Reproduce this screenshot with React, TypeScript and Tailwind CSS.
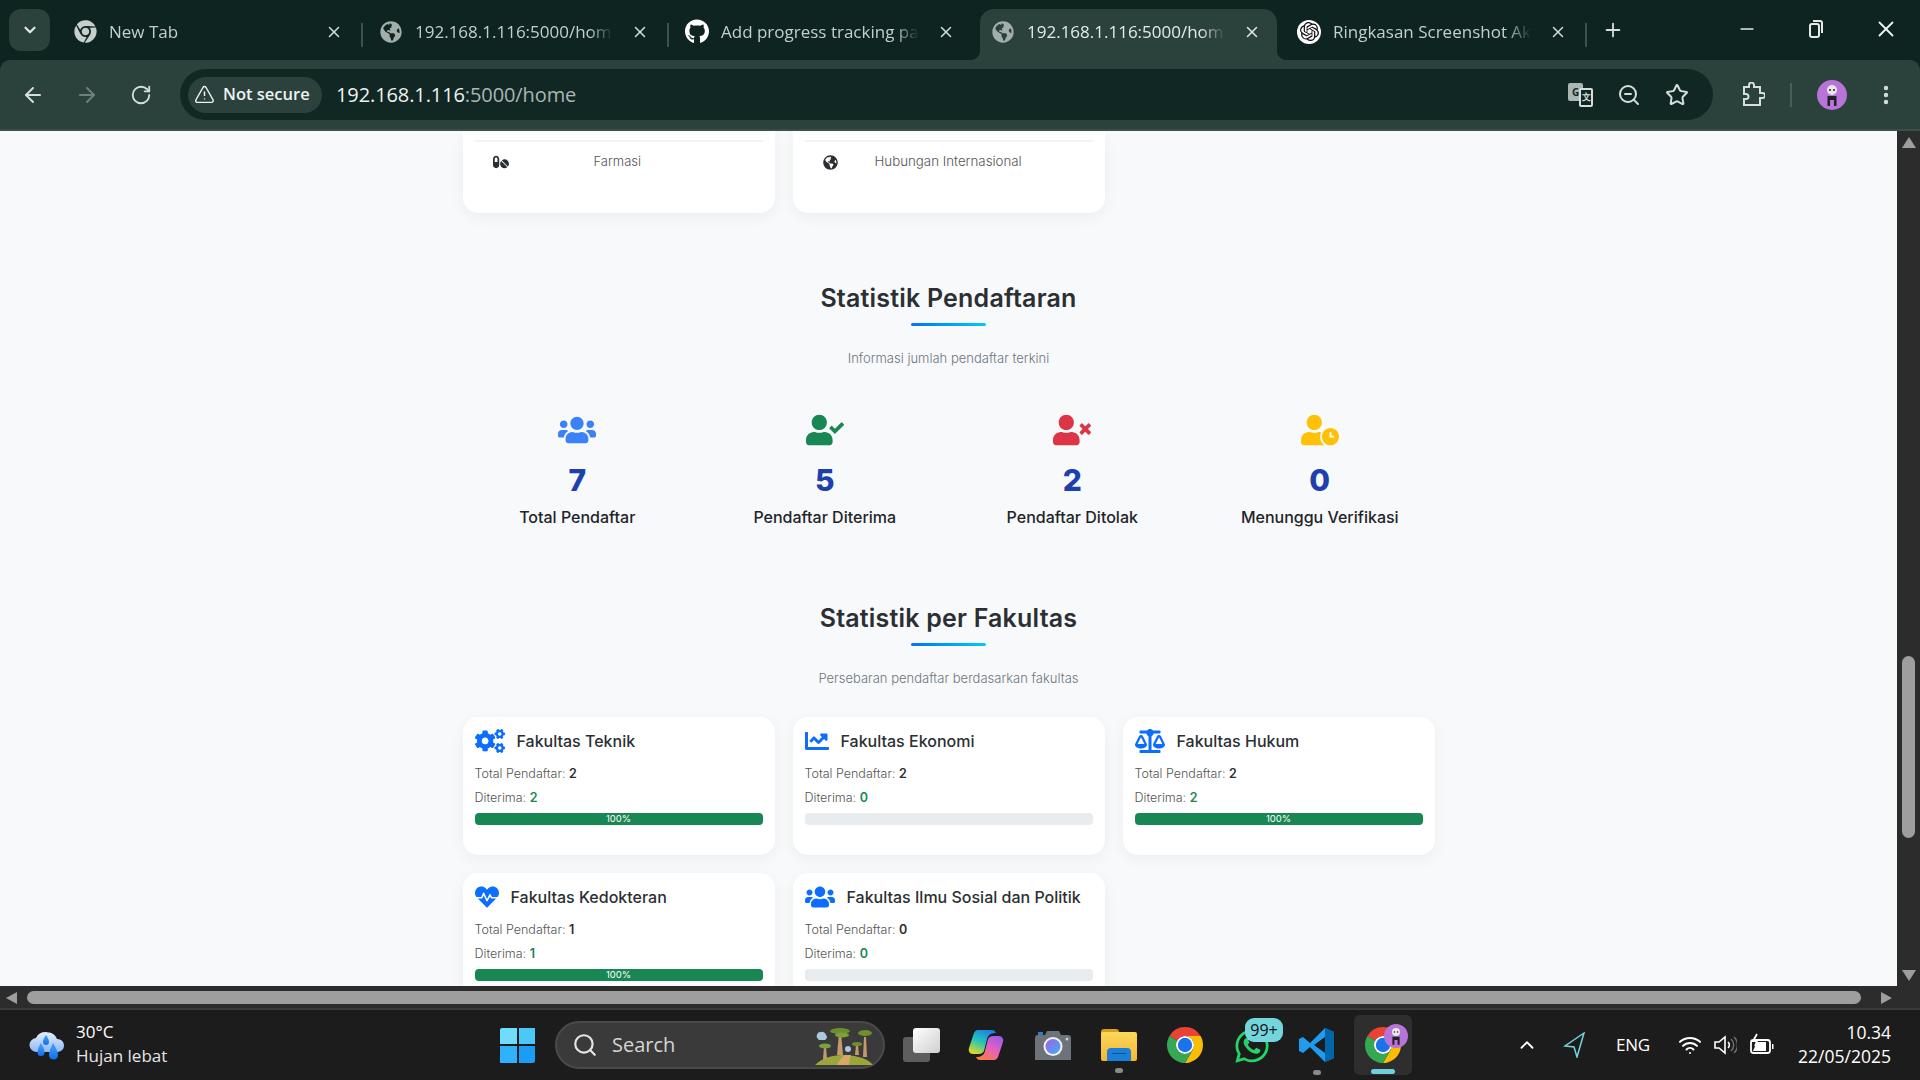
import { ArrowLeft, ArrowRight, ChevronDown, ChevronUp, Minus, MoreVertical, Plus, RotateCw, Search, Star, TriangleAlert, Wifi, X, ZoomOut } from 'lucide-react';
import { FaBalanceScale, FaChartLine, FaChrome, FaCogs, FaGithub, FaGlobeAmericas, FaHeartbeat, FaPills, FaUserCheck, FaUserClock, FaUsers, FaUserTimes, FaWhatsapp } from 'react-icons/fa';
import { SiOpenai } from 'react-icons/si';

const uiFont = "font-['Open_Sans','Noto_Sans',sans-serif]";

const ChromeLogo = ({ size = 36 }: { size?: number }) => (
    <svg width={size} height={size} viewBox="4 4 40 40">
        <path d="M24 4A20 20 0 0 1 41.32 14L24 14A10 10 0 0 0 15.34 19L6.68 14A20 20 0 0 1 24 4Z" fill="#ea4335" />
        <path d="M41.32 14A20 20 0 0 1 24 44L32.66 29A10 10 0 0 0 24 14Z" fill="#fbbc04" />
        <path d="M24 44A20 20 0 0 1 6.68 14L15.34 19A10 10 0 0 0 32.66 29Z" fill="#34a853" />
        <circle cx="24" cy="24" r="10" fill="#fff" />
        <circle cx="24" cy="24" r="8" fill="#1a73e8" />
    </svg>
);

const Avatar = ({ size }: { size: number }) => (
    <svg width={size} height={size} viewBox="0 0 30 30">
        <circle cx="15" cy="15" r="15" fill="#b873d8" />
        <circle cx="15" cy="10" r="5" fill="#e8e8e8" />
        <circle cx="13" cy="10" r="1" fill="#222" />
        <circle cx="17" cy="10" r="1" fill="#222" />
        <path d="M10.5 16h9v10h-2.5v-6h-4v6h-2.5z" fill="#222" />
    </svg>
);

const Tab = ({ icon, title, active = false, separator = true }: any) => (
    <div className={`relative flex items-center h-[51px] shrink-0 pb-[6px] ${active ? 'bg-[#2a413c] rounded-t-[14px] ml-[5px] mr-[4px] w-[297px] pl-[11px]' : 'w-[306px] pl-[16px]'}`}>
        {active && <div className="absolute -left-[10px] bottom-0 w-[10px] h-[10px] bg-[radial-gradient(circle_at_0_0,transparent_10px,#2a413c_10.5px)]" />}
        {active && <div className="absolute -right-[10px] bottom-0 w-[10px] h-[10px] bg-[radial-gradient(circle_at_100%_0,transparent_10px,#2a413c_10.5px)]" />}
        <div className="w-[24px] h-[24px] flex items-center justify-center shrink-0">{icon}</div>
        <div className={`ml-[12px] w-[198px] overflow-hidden whitespace-nowrap text-[17px] ${active ? 'text-[#e4eae8]' : 'text-[#c3cfcc]'} [mask-image:linear-gradient(to_right,black_88%,transparent)]`}>{title}</div>
        <X size={18} strokeWidth={2} className={`ml-[18px] shrink-0 ${active ? 'text-[#e4eae8]' : 'text-[#d5dedb]'}`} />
        {separator && <div className="absolute right-0 top-[14px] w-[2px] h-[24px] bg-[#3d514d]" />}
    </div>
);

const SectionTitle = ({ title, subtitle, top }: any) => (
    <div className={`text-center ${top}`}>
        <h2 className="text-[25px] leading-[36px] font-semibold text-[#2b2f33] tracking-[0.2px]">{title}</h2>
        <div className="mx-auto mt-[7px] w-[75px] h-[3px] rounded-full bg-gradient-to-r from-[#0d6efd] to-[#0dcaf0]" />
        <p className="mt-[22px] text-[13px] leading-[20px] font-light text-[#6c757d]">{subtitle}</p>
    </div>
);

const stats = [
    { icon: <FaUsers size={38} className="text-[#3b82f6]" />, value: '7', label: 'Total Pendaftar' },
    { icon: <FaUserCheck size={38} className="text-[#198754]" />, value: '5', label: 'Pendaftar Diterima' },
    { icon: <FaUserTimes size={38} className="text-[#dc3545]" />, value: '2', label: 'Pendaftar Ditolak' },
    { icon: <FaUserClock size={38} className="text-[#ffc107]" />, value: '0', label: 'Menunggu Verifikasi' },
];

const faculties = [
    { icon: <FaCogs size={30} />, name: 'Fakultas Teknik', total: 2, ok: 2, pct: 100 },
    { icon: <FaChartLine size={24} />, name: 'Fakultas Ekonomi', total: 2, ok: 0, pct: 0 },
    { icon: <FaBalanceScale size={30} />, name: 'Fakultas Hukum', total: 2, ok: 2, pct: 100 },
    { icon: <FaHeartbeat size={24} />, name: 'Fakultas Kedokteran', total: 1, ok: 1, pct: 100 },
    { icon: <FaUsers size={30} />, name: 'Fakultas Ilmu Sosial dan Politik', total: 0, ok: 0, pct: 0 },
];

const FacultyCard = ({ f }: any) => (
    <div className="bg-white rounded-[15px] shadow-[0_4px_15px_rgba(0,0,0,0.05)] px-[12px] pt-[12px] pb-[30px]">
        <div className="flex items-center gap-[12px] h-[24px]">
            <span className="text-[#0d6efd]">{f.icon}</span>
            <span className="text-[16px] font-medium text-[#2b2f33]">{f.name}</span>
        </div>
        <p className="mt-[11px] text-[12.5px] leading-[20px] font-light text-[#555]">Total Pendaftar: <b className="font-semibold text-[#2b2f33]">{f.total}</b></p>
        <p className="mt-[4px] text-[12.5px] leading-[20px] font-light text-[#555]">Diterima: <b className="font-semibold text-[#198754]">{f.ok}</b></p>
        <div className="mt-[5px] h-[12px] rounded-[4px] bg-[#e9ecef] overflow-hidden">
            {f.pct > 0 && (
                <div className="h-full bg-[#198754] text-white text-[9.5px] leading-[12px] font-normal text-center" style={{ width: `${f.pct}%` }}>{f.pct}%</div>
            )}
        </div>
    </div>
);

const Page = () => (
    <div className="flex-1 min-w-0 h-full overflow-hidden bg-[#f8f9fb] font-['Inter',sans-serif]">
        <div className="mx-auto w-[990px]">
            <div className="grid grid-cols-3 gap-[18px] px-[9px]">
                <div className="h-[82px] bg-white rounded-b-[15px] shadow-[0_4px_15px_rgba(0,0,0,0.05)] px-[12px] pt-[9px]">
                    <div className="flex items-center h-[42px] border-t-2 border-[#f1f2f3] text-[13px] font-light text-[#555]">
                        <FaPills size={16} className="ml-[18px] text-[#2b2f33]" />
                        <span className="ml-[85px]">Farmasi</span>
                    </div>
                </div>
                <div className="h-[82px] bg-white rounded-b-[15px] shadow-[0_4px_15px_rgba(0,0,0,0.05)] px-[12px] pt-[9px]">
                    <div className="flex items-center h-[42px] border-t-2 border-[#f1f2f3] text-[13px] font-light text-[#555]">
                        <FaGlobeAmericas size={15} className="ml-[18px] text-[#2b2f33]" />
                        <span className="ml-[37px] text-[13.3px]">Hubungan Internasional</span>
                    </div>
                </div>
            </div>

            <SectionTitle title="Statistik Pendaftaran" subtitle="Informasi jumlah pendaftar terkini" top="mt-[67px]" />

            <div className="grid grid-cols-4 mt-[47px]">
                {stats.map((s) => (
                    <div key={s.label} className="flex flex-col items-center">
                        <div className="h-[30px] flex items-center">{s.icon}</div>
                        <div className="mt-[17px] text-[30px] leading-[36px] font-extrabold text-[#1e40af]">{s.value}</div>
                        <div className="mt-[7px] text-[16px] leading-[24px] font-medium text-[#212529]">{s.label}</div>
                    </div>
                ))}
            </div>

            <SectionTitle title="Statistik per Fakultas" subtitle="Persebaran pendaftar berdasarkan fakultas" top="mt-[71px]" />

            <div className="grid grid-cols-3 gap-[18px] px-[9px] mt-[29px]">
                {faculties.map((f) => <FacultyCard key={f.name} f={f} />)}
            </div>
        </div>
    </div>
);

const Tabs = () => (
    <div className="flex items-end h-[60px] pl-[9px] text-white">
        <div className="self-start mt-[9px] w-[41px] h-[42px] rounded-[12px] bg-[#2a413c] flex items-center justify-center mr-[7px]">
            <ChevronDown size={18} strokeWidth={3} className="text-[#dfe6e4]" />
        </div>
        <Tab icon={<FaChrome size={23} className="text-[#c5d0cd]" />} title="New Tab" />
        <Tab icon={<FaGlobeAmericas size={22} className="text-[#a3adaa]" />} title="192.168.1.116:5000/home" />
        <Tab icon={<FaGithub size={25} className="text-white" />} title="Add progress tracking page" separator={false} />
        <Tab active icon={<FaGlobeAmericas size={22} className="text-[#a3adaa]" />} title="192.168.1.116:5000/home" separator={false} />
        <Tab icon={<span className="w-[24px] h-[24px] rounded-full bg-white flex items-center justify-center"><SiOpenai size={19} className="text-[#111]" /></span>} title="Ringkasan Screenshot Ak" />
        <Plus size={22} strokeWidth={2} className="mb-[19px] ml-[15px] text-[#d5dedb]" />
        <div className="flex items-center mb-[18px] ml-[113px]">
            <Minus size={20} strokeWidth={2} className="text-[#e4eae8]" />
            <svg width="16" height="20" viewBox="0 0 16 20" fill="none" stroke="#e4eae8" strokeWidth="2" className="ml-[51px]">
                <rect x="2" y="5" width="9" height="13" rx="2" />
                <path d="M5 2h7a2 2 0 0 1 2 2v10" />
            </svg>
            <X size={26} strokeWidth={1.7} className="ml-[49px] text-[#f0f3f2]" />
        </div>
    </div>
);

const Toolbar = () => (
    <div className="h-[71px] bg-[#2a413c] rounded-t-[10px] border-b-2 border-[#3a4e4a] flex items-center shrink-0">
        <ArrowLeft size={24} strokeWidth={2} className="ml-[21px] text-[#d5dedb]" />
        <ArrowRight size={24} strokeWidth={2} className="ml-[30px] text-[#6f817d]" />
        <RotateCw size={22} strokeWidth={2} className="ml-[31px] text-[#d5dedb]" />
        <div className="ml-[28px] w-[1533px] h-[51px] rounded-full bg-[#112723] flex items-center pl-[8px]">
            <div className="w-[134px] h-[36px] rounded-full bg-[#2a413c] flex items-center pl-[6px] gap-[8px] text-[#eef2f1] text-[16.5px] font-semibold">
                <TriangleAlert size={21} strokeWidth={1.7} />
                <span className="whitespace-nowrap">Not secure</span>
            </div>
            <div className="ml-[14px] text-[20px] tracking-[-0.1px] whitespace-nowrap text-[#eef2f1]">192.168.1.116<span className="text-[#a9b6b3]">:5000/home</span></div>
            <div className="ml-auto flex items-center">
                <div className="relative w-[26px] h-[24px] mr-[23px]">
                    <div className="absolute left-0 top-0 w-[15px] h-[18px] rounded-[2px] bg-[#aab6b3] text-[#112723] text-[10px] leading-[18px] font-bold text-center">G</div>
                    <div className="absolute left-[11px] top-[5px] w-[14px] h-[19px] rounded-[2px] border-2 border-[#d5dedb] bg-[#112723] text-[#d5dedb] text-[9px] leading-[14px] font-bold text-center">文</div>
                </div>
                <ZoomOut size={24} strokeWidth={2} className="text-[#d5dedb]" />
                <Star size={24} strokeWidth={2} className="ml-[24px] mr-[24px] text-[#d5dedb]" />
            </div>
        </div>
        <svg width="24" height="26" viewBox="0 0 24 26" fill="none" stroke="#d5dedb" strokeWidth="2" className="ml-[28px]">
            <path d="M3 5h5V3a2.5 2.5 0 0 1 5 0v2h6v6h2.5a2 2 0 0 1 0 5H19v7H3v-6h2a2.5 2.5 0 0 0 0-5H3z" />
        </svg>
        <div className="ml-[25px] w-[2px] h-[24px] bg-[#4a5d59]" />
        <div className="ml-[25px]"><Avatar size={30} /></div>
        <MoreVertical size={24} strokeWidth={2.4} className="ml-[27px] text-[#d5dedb]" />
    </div>
);

const WeatherIcon = () => (
    <svg width="36" height="34" viewBox="0 0 36 34">
        <defs>
            <linearGradient id="cloud" x1="0" y1="0" x2="0" y2="1"><stop offset="0" stopColor="#e3eefe" /><stop offset="1" stopColor="#8fb8f5" /></linearGradient>
            <linearGradient id="drop" x1="0" y1="0" x2="0" y2="1"><stop offset="0" stopColor="#4aa3f7" /><stop offset="1" stopColor="#0f6ff0" /></linearGradient>
        </defs>
        <path d="M8 24a7 7 0 0 1-1-14 11 9 0 0 1 21 1 6.500 6.500 0 0 1 1 13z" fill="url(#cloud)" />
        <path d="M17 7c2 3 3 5 3 7a3 3 0 0 1-6 0c0-2 1-4 3-7z" fill="url(#drop)" />
        <path d="M12 15c2.500 4 3.500 7 3.500 9.500a3.500 3.500 0 0 1-7 0c0-2.500 1-5.500 3.500-9.500z" fill="url(#drop)" />
        <path d="M24 15c3 5 5 9 5 12a4.500 4.500 0 0 1-9 0c0-3 1.500-7 4-12z" fill="url(#drop)" />
    </svg>
);

const Trees = () => (
    <svg width="62" height="40" viewBox="0 0 62 40">
        <path d="M2 40c8-8 20-10 28-10s24 2 30 10z" fill="#9aa53a" />
        <path d="M24 40c2-4 5-8 8-10h6c-1 3-2 7-2 10z" fill="#d9a868" />
        <path d="M24 30l2-22h2l2 22zM10 34l1-12h2l1 12zM50 32l1-20h2l1 20zM42 30l1-10h2l1 10z" fill="#c49a6c" />
        <ellipse cx="27" cy="6" rx="10" ry="3" fill="#6f8f2f" />
        <ellipse cx="29" cy="10" rx="7" ry="2.500" fill="#7ea03a" />
        <ellipse cx="52" cy="8" rx="7" ry="3" fill="#6f8f2f" />
        <ellipse cx="12" cy="21" rx="6" ry="2.500" fill="#7ea03a" />
        <ellipse cx="44" cy="19" rx="5" ry="2" fill="#6f8f2f" />
        <path d="M5 14a4 4 0 0 1 3-7 4 4 0 0 1 5 3 3 3 0 0 1-1 5H6z" fill="#a9c9dc" />
        <circle cx="35" cy="24" r="3" fill="#a9c9dc" />
    </svg>
);

const PinDot = () => <div className="absolute left-[14px] bottom-[-12px] w-[8px] h-[5px] rounded-full bg-[#8a8a8a]" />;

const Taskbar = () => (
    <div className={`h-[70px] bg-[#1c1c1c] flex items-center text-white shrink-0 pl-[29px] ${uiFont}`}>
        <WeatherIcon />
        <div className="ml-[11px] -mt-[2px] w-[424px] text-[17px] leading-[24px]">
            <div>30°C</div>
            <div className="text-[#e6e6e6]">Hujan lebat</div>
        </div>
        <div className="w-[35px] h-[35px] grid grid-cols-2 grid-rows-2 gap-[2px]">
            <div className="bg-[#6fdcfb] rounded-tl-[2px]" />
            <div className="bg-[#4bc8fa]" />
            <div className="bg-[#2fb2fb]" />
            <div className="bg-[#1a9df5] rounded-br-[2px]" />
        </div>
        <div className="ml-[20px] w-[330px] h-[48px] rounded-full bg-[#3a3a3a] border-2 border-[#4a4a4a] flex items-center pl-[15px] pr-[8px]">
            <Search size={26} strokeWidth={2} className="text-[#e6e6e6]" />
            <span className="ml-[14px] text-[20px] text-[#d6d6d6]">Search</span>
            <div className="ml-auto"><Trees /></div>
        </div>
        <div className="ml-[18px] relative w-[37px] h-[34px]">
            <div className="absolute left-0 bottom-0 w-[27px] h-[25px] rounded-[3px] bg-[#5e5e5e]" />
            <div className="absolute right-0 top-0 w-[27px] h-[25px] rounded-[3px] bg-gradient-to-br from-[#ffffff] to-[#cfcfcf]" />
        </div>
        <svg width="36" height="32" viewBox="0 0 36 32" className="ml-[28px]">
            <defs>
                <linearGradient id="cop1" x1="0.7" y1="0" x2="0.2" y2="1"><stop offset="0" stopColor="#1f7fe8" /><stop offset="0.5" stopColor="#22c6b8" /><stop offset="1" stopColor="#e8d820" /></linearGradient>
                <linearGradient id="cop2" x1="0.8" y1="0" x2="0.2" y2="1"><stop offset="0" stopColor="#9b5be8" /><stop offset="0.5" stopColor="#e860c0" /><stop offset="1" stopColor="#f88038" /></linearGradient>
            </defs>
            <path d="M10 1h14c2 0 3 1 4 3-5 0-8 2-9 6l-3 12c-1 2-3 3-5 3H5c-3 0-5-3-4-6l5-15c1-2 2-3 4-3z" fill="url(#cop1)" />
            <path d="M26 31H12c-2 0-3-1-4-3 5 0 8-2 9-6l3-12c1-2 3-3 5-3h6c3 0 5 3 4 6l-5 15c-1 2-2 3-4 3z" fill="url(#cop2)" />
        </svg>
        <svg width="36" height="30" viewBox="0 0 36 30" className="ml-[31px]">
            <defs>
                <linearGradient id="lens" x1="0" y1="0" x2="1" y2="1"><stop offset="0" stopColor="#a060e8" /><stop offset="1" stopColor="#40b0f0" /></linearGradient>
            </defs>
            <path d="M12 1h12l2 4h7a3 3 0 0 1 3 3v22H0V8a3 3 0 0 1 3-3h7z" fill="#6d7379" />
            <path d="M3 2h5v3H3z" fill="#2080e0" />
            <circle cx="18" cy="16.500" r="9.500" fill="#f2f2f8" />
            <circle cx="18" cy="16.500" r="7.500" fill="url(#lens)" />
            <circle cx="32" cy="9" r="1.500" fill="#c8ccd0" />
        </svg>
        <div className="relative ml-[30px] w-[36px] h-[32px]">
            <div className="absolute left-0 top-0 w-[18px] h-[8px] rounded-t-[3px] bg-[#d89e1f]" />
            <div className="absolute left-0 top-[3px] w-[36px] h-[29px] rounded-[2px] bg-gradient-to-b from-[#fbd75b] to-[#f4b82e]" />
            <div className="absolute left-[6px] bottom-0 w-[24px] h-[13px] rounded-t-[4px] bg-[#1a7fd6]">
                <div className="mt-[5px] mx-auto w-[14px] h-[1px] bg-[#0f4f90]" />
            </div>
            <PinDot />
        </div>
        <div className="ml-[30px]"><ChromeLogo /></div>
        <div className="relative ml-[30px] w-[36px] h-[36px]">
            <FaWhatsapp size={38} className="text-[#25d366]" />
            <div className="absolute -top-[9px] left-[12px] w-[38px] h-[24px] rounded-[9px] bg-[#73d6dc] text-[#111] text-[16px] leading-[24px] text-center">99+</div>
        </div>
        <div className="relative ml-[30px] w-[36px] h-[36px]">
            <svg width="36" height="36" viewBox="0 0 36 36">
                <path d="M26 1l9 4v26l-9 4L11 20l-7 6-4-2V12l4-2 7 6z" fill="#1f9cf0" />
                <path d="M26 1l9 4v26l-9 4z" fill="#0065a9" />
                <path d="M26 10L15 18l11 8z" fill="#1c1c1c" />
            </svg>
            <PinDot />
        </div>
        <div className="relative ml-[19px] w-[58px] h-[60px] rounded-[6px] bg-[#2e2e2e] flex items-center justify-center">
            <ChromeLogo size={36} />
            <div className="absolute left-[30px] top-[9px]"><Avatar size={24} /></div>
            <div className="absolute left-[17px] bottom-[1px] w-[24px] h-[5px] rounded-full bg-[#6fd0dc]" />
        </div>
        <ChevronUp size={22} strokeWidth={2} className="ml-[104px] text-white" />
        <svg width="24" height="26" viewBox="0 0 24 26" fill="none" stroke="#73d6dc" strokeWidth="1.500" className="ml-[25px]">
            <path d="M21 1L2 14l9 1 3 10z" />
        </svg>
        <span className="ml-[26px] w-[40px] text-center text-[17px] tracking-[-0.2px]">ENG</span>
        <Wifi size={24} strokeWidth={2} className="ml-[25px]" />
        <svg width="24" height="24" viewBox="0 0 24 24" fill="none" className="ml-[11px]">
            <path d="M2 9h4l6-5v16l-6-5H2z" stroke="#fff" strokeWidth="1.600" />
            <path d="M15 9a4 4 0 0 1 0 6" stroke="#fff" strokeWidth="1.600" />
            <path d="M18 6a8 8 0 0 1 0 12M21 4a11 11 0 0 1 0 16" stroke="#6e6e6e" strokeWidth="1.500" />
        </svg>
        <svg width="26" height="24" viewBox="0 0 26 24" fill="none" className="ml-[12px]">
            <rect x="2" y="7" width="19" height="13" rx="2.500" stroke="#fff" strokeWidth="1.800" />
            <path d="M23 11h1.500v5H23z" fill="#fff" />
            <path d="M4 18L8 9l9 0v9z" fill="#fff" />
            <path d="M8 1L4 8h4l-2 5" stroke="#fff" strokeWidth="1.800" />
        </svg>
        <div className="flex-1 -mt-[2px] text-right pr-[29px] text-[17.5px] leading-[24px]">
            <div>10.34</div>
            <div>22/05/2025</div>
        </div>
    </div>
);

const ScrollV = () => (
    <div className="w-[23px] h-full bg-[#2c2c2c] flex flex-col items-center shrink-0">
        <div className="mt-[6px] w-0 h-0 border-x-[7px] border-x-transparent border-b-[11px] border-b-[#9e9e9e]" />
        <div className="mt-[508px] w-[13px] h-[182px] rounded-full bg-[#9e9e9e]" />
        <div className="mt-[132px] w-0 h-0 border-x-[7px] border-x-transparent border-t-[11px] border-t-[#9e9e9e]" />
    </div>
);

const ScrollH = () => (
    <div className="h-[24px] bg-[#2c2c2c] border-b-2 border-[#3a3a3a] flex items-start pt-[5px] shrink-0">
        <div className="ml-[6px] mt-[1px] w-0 h-0 border-y-[6px] border-y-transparent border-r-[11px] border-r-[#9e9e9e]" />
        <div className="ml-[10px] w-[1834px] h-[13px] rounded-full bg-[#9e9e9e]" />
        <div className="ml-[20px] mt-[1px] w-0 h-0 border-y-[6px] border-y-transparent border-l-[11px] border-l-[#9e9e9e]" />
    </div>
);

export default function App() {
    return (
        <div className={`w-[1920px] h-[1080px] overflow-hidden flex flex-col bg-[#0d2420] ${uiFont}`}>
            <Tabs />
            <Toolbar />
            <div className="flex h-[855px] shrink-0">
                <Page />
                <ScrollV />
            </div>
            <ScrollH />
            <Taskbar />
        </div>
    );
}
